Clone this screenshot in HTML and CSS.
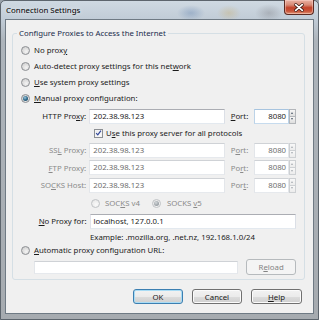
FILE: index.html
```html
<!DOCTYPE html>
<html>
<head>
<meta charset="utf-8">
<title>Connection Settings</title>
<link rel="stylesheet" href="styles.css">
</head>
<body>
<div class="window">
  <div class="titlebar">
    <span class="title">Connection Settings</span>
    <div class="close">
      <svg width="30" height="15" viewBox="0 0 30 15">
        <path d="M11.5 4.5 L18.5 10.5 M18.5 4.5 L11.5 10.5" stroke="#3a1a14" stroke-width="3.4" stroke-linecap="round" fill="none"/>
        <path d="M11.5 4.5 L18.5 10.5 M18.5 4.5 L11.5 10.5" stroke="#ffffff" stroke-width="1.9" stroke-linecap="round" fill="none"/>
      </svg>
    </div>
  </div>
  <div class="client">
    <fieldset class="group">
      <legend>Configure Proxies to Access the Internet</legend>
      <div class="opt first"><span class="radio"></span><span>No prox<u>y</u></span></div>
      <div class="opt"><span class="radio"></span><span>Auto-detect proxy settings for this net<u>w</u>ork</span></div>
      <div class="opt"><span class="radio"></span><span><u>U</u>se system proxy settings</span></div>
      <div class="opt"><span class="radio checked"></span><span><u>M</u>anual proxy configuration:</span></div>

      <div class="prow tall first-prow">
        <span class="plabel">HTTP Pro<u>x</u>y:</span>
        <div class="field host">202.38.98.123</div>
        <span class="portlabel"><u>P</u>ort:</span>
        <div class="field port focus">8080</div>
        <div class="spin"><span class="up"></span><span class="down"></span></div>
      </div>

      <div class="chkrow">
        <span class="check"><svg width="8" height="8" viewBox="0 0 8 8"><path d="M1.3 4.2 L3.2 6.2 L6.8 1.4" stroke="#33489a" stroke-width="1.4" fill="none"/></svg></span>
        <span>U<u>s</u>e this proxy server for all protocols</span>
      </div>

      <div class="prow tall disabled">
        <span class="plabel">SS<u>L</u> Proxy:</span>
        <div class="field host">202.38.98.123</div>
        <span class="portlabel">P<u>o</u>rt:</span>
        <div class="field port">8080</div>
        <div class="spin"><span class="up"></span><span class="down"></span></div>
      </div>

      <div class="prow short disabled">
        <span class="plabel"><u>F</u>TP Proxy:</span>
        <div class="field host">202.38.98.123</div>
        <span class="portlabel">Po<u>r</u>t:</span>
        <div class="field port">8080</div>
        <div class="spin"><span class="up"></span><span class="down"></span></div>
      </div>

      <div class="prow tall disabled">
        <span class="plabel">SO<u>C</u>KS Host:</span>
        <div class="field host">202.38.98.123</div>
        <span class="portlabel">Por<u>t</u>:</span>
        <div class="field port">8080</div>
        <div class="spin"><span class="up"></span><span class="down"></span></div>
      </div>

      <div class="socksrow disabled">
        <div class="sopt v4"><span class="radio"></span><span>SOC<u>K</u>S v4</span></div>
        <div class="sopt v5"><span class="radio checked"></span><span>SOCKS <u>v</u>5</span></div>
      </div>

      <div class="prow tall">
        <span class="plabel"><u>N</u>o Proxy for:</span>
        <div class="field noproxy">localhost, 127.0.0.1</div>
      </div>

      <div class="example">Example: .mozilla.org, .net.nz, 192.168.1.0/24</div>

      <div class="opt auto"><span class="radio"></span><span><u>A</u>utomatic proxy configuration URL:</span></div>

      <div class="urlrow">
        <div class="field url disabledfield"></div>
        <div class="btn reload">R<u>e</u>load</div>
      </div>
    </fieldset>

    <div class="buttons">
      <div class="btn default">OK</div>
      <div class="btn">Cancel</div>
      <div class="btn"><u>H</u>elp</div>
    </div>
  </div>
</div>
</body>
</html>
```

FILE: styles.css
```css
* { box-sizing: border-box; }
html, body { margin: 0; padding: 0; }
body {
  width: 319px;
  height: 320px;
  overflow: hidden;
  font-family: "Noto Sans", "Open Sans", sans-serif;
  font-size: 7.8px;
  line-height: 12px;
  color: #1b1b1b;
  background: #9aa2aa;
}
u { text-decoration-thickness: 0.8px; text-underline-offset: 1px; }

.window {
  width: 319px;
  height: 320px;
  border: 1px solid #5d656d;
  border-radius: 5px 5px 0 0;
  background:
    radial-gradient(ellipse 14px 8px at 190px 12px, rgba(110,140,180,0.45), rgba(110,140,180,0) 100%),
    radial-gradient(ellipse 12px 8px at 228px 12px, rgba(200,180,130,0.45), rgba(200,180,130,0) 100%),
    radial-gradient(ellipse 14px 9px at 268px 12px, rgba(120,120,125,0.35), rgba(120,120,125,0) 100%),
    linear-gradient(180deg, #cfd9e2 0, #c1ccd7 18px, #adb4bb 40px, #a6abb0 100%);
  display: flex;
  flex-direction: column;
}

.titlebar {
  height: 18px;
  display: flex;
  justify-content: space-between;
  align-items: flex-start;
  padding-left: 5px;
  padding-right: 4px;
}
.title {
  line-height: 18px;
  font-size: 7.9px;
  color: #000;
  text-shadow: 0 0 4px rgba(255,255,255,0.9);
}
.close {
  width: 30px;
  height: 15px;
  margin-top: -1px;
  border: 1px solid #5a2a22;
  border-top: none;
  border-radius: 0 0 4px 4px;
  background: linear-gradient(180deg, #e9b2a4 0, #d88a76 35%, #c2432b 55%, #c9553a 80%, #e09a7c 100%);
  box-shadow: inset 0 0 0 1px rgba(255,220,210,0.45);
  display: flex;
}

.client {
  margin-left: 4px;
  width: 309px;
  height: 295px;
  border: 1px solid #6f7a84;
  background: #f0f0f0;
  padding: 7px 0 0 6px;
}

.group {
  margin: 0;
  width: 293px;
  border: 1px solid #d5dfe5;
  border-radius: 3px;
  padding: 0 8px 1px 8px;
  min-width: 0;
}
.group legend {
  padding: 0 2px;
  margin-left: -4px;
  line-height: 12px;
  color: #1a2b4c;
}

.opt {
  height: 16px;
  display: flex;
  align-items: center;
  gap: 4px;
}
.opt.first { margin-top: 3px; }
.opt.auto { height: 12px; }

.radio {
  width: 9px;
  height: 9px;
  flex: none;
  border-radius: 50%;
  border: 1px solid #8c8f93;
  background: radial-gradient(circle at 60% 65%, #f4f4f4 0, #dcdcdc 55%, #c8c8c8 100%);
  display: flex;
  align-items: center;
  justify-content: center;
}
.radio.checked::after {
  content: "";
  width: 5px;
  height: 5px;
  border-radius: 50%;
  background: radial-gradient(circle at 40% 35%, #9ec7dc 0, #2f6b8c 50%, #12364e 100%);
}

.prow {
  display: flex;
  align-items: center;
}
.prow.tall { height: 18px; }
.prow.short { height: 17px; }
.prow.first-prow { margin-top: 1px; }

.plabel {
  width: 66px;
  text-align: right;
  white-space: nowrap;
}
.field {
  height: 15px;
  margin-left: 3px;
  background: #fff;
  border: 1px solid;
  border-color: #abadb3 #dbdfe6 #e3e9ef #e2e3ea;
  padding: 0 3px;
  line-height: 13px;
  white-space: nowrap;
  overflow: hidden;
}
.field.host { width: 137px; }
.field.noproxy { width: 208px; }
.portlabel {
  margin-left: 6px;
  width: 24px;
}
.field.port {
  margin-left: 0;
  width: 35px;
  text-align: right;
  padding-right: 2px;
}
.field.port.focus { border-color: #a7c4df #bcd3e8 #c6dbee #bcd3e8; }

.spin {
  width: 7px;
  height: 15px;
  display: flex;
  flex-direction: column;
}
.spin span {
  flex: 1;
  border: 1px solid #b3b6ba;
  background: linear-gradient(180deg, #f6f6f6, #dedede);
  position: relative;
}
.spin .down { border-top: none; }
.spin span::after {
  content: "";
  position: absolute;
  left: 1px;
  top: 2px;
  border-left: 1.5px solid transparent;
  border-right: 1.5px solid transparent;
}
.spin .up::after { border-bottom: 2px solid #4c5a6a; }
.spin .down::after { border-top: 2px solid #4c5a6a; top: 1.5px; }

.disabled { color: #8a8a8a; }
.disabled .field { border-color: #cfd2d6 #e3e6ea #e6e9ed #e3e6ea; color: #6d6d6d; }
.disabled .spin span { border-color: #cdd0d3; background: linear-gradient(180deg, #f8f8f8, #ececec); }
.disabled .spin span::after { border-top-color: #a8adb3; border-bottom-color: #a8adb3; }
.disabled .spin .up::after { border-top-color: transparent; }
.disabled .spin .down::after { border-bottom-color: transparent; }

.chkrow {
  height: 16px;
  display: flex;
  align-items: center;
  padding-left: 73px;
  gap: 3px;
}
.check {
  width: 9px;
  height: 9px;
  border: 1px solid #8c8f93;
  background: linear-gradient(135deg, #e8e8e8, #ffffff);
  box-shadow: inset 0 0 0 1px #f4f4f4;
  display: flex;
  align-items: center;
  justify-content: center;
}
.check svg { display: block; }

.socksrow {
  height: 18px;
  display: flex;
  align-items: center;
}
.sopt {
  display: flex;
  align-items: center;
  gap: 5px;
}
.sopt.v4 { margin-left: 70px; }
.sopt.v5 { margin-left: 12px; gap: 6px; }
.disabled .radio {
  border-color: #c0c3c6;
  background: radial-gradient(circle at 60% 65%, #fafafa 0, #ececec 60%, #e0e0e0 100%);
}
.disabled .radio.checked::after {
  background: radial-gradient(circle at 40% 35%, #d4d8db 0, #9ea4a9 60%, #8c9196 100%);
}

.example {
  height: 14px;
  line-height: 14px;
  padding-left: 69px;
}

.urlrow {
  height: 22px;
  display: flex;
  align-items: center;
  padding-left: 10px;
}
.field.url { width: 205px; height: 13px; }
.field.disabledfield { border-color: #cfd2d6 #e3e6ea #e6e9ed #e3e6ea; }

.btn {
  height: 15px;
  width: 50px;
  border: 1px solid #707070;
  border-radius: 3px;
  background: linear-gradient(180deg, #f2f2f2 0, #ebebeb 50%, #dddddd 50%, #cfcfcf 100%);
  box-shadow: inset 0 0 0 1px #fbfbfb;
  display: flex;
  align-items: center;
  justify-content: center;
  line-height: 12px;
}
.btn.reload {
  margin-left: 8px;
  height: 16px;
  border-color: #b6babd;
  background: #f4f4f4;
  box-shadow: none;
  color: #838383;
}
.btn.default {
  border-color: #3c7fb1;
  box-shadow: inset 0 0 0 1px #a9dcf5;
}

.buttons {
  margin-top: 9px;
  display: flex;
  justify-content: flex-end;
  gap: 9px;
  padding-right: 11px;
}
.buttons .btn:last-child { width: 51px; }
```
